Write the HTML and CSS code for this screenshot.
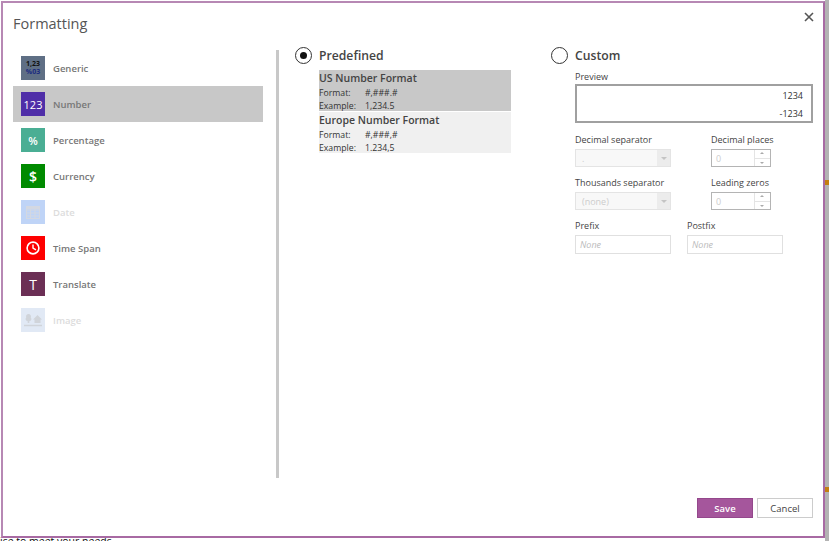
FILE: index.html
```html
<!DOCTYPE html>
<html lang="en">
<head>
    <meta charset="UTF-8">
    <title>Formatting</title>
    <link rel="stylesheet" href="styles.css">
</head>
<body>
    <div class="dialog">
        <div class="dialog-head">
            <h1>Formatting</h1>
            <svg class="close" width="10" height="10" viewBox="0 0 10 10"><path d="M1 1l8 8M9 1l-8 8" stroke="#555" stroke-width="1.6" fill="none"/></svg>
        </div>
        <div class="dialog-body">
            <ul class="nav">
                <li class="nav-item">
                    <span class="tile tile-generic"><span>1,23</span><span class="blue">%03</span></span>
                    Generic
                </li>
                <li class="nav-item active">
                    <span class="tile tile-number">123</span>
                    Number
                </li>
                <li class="nav-item">
                    <span class="tile tile-percent">%</span>
                    Percentage
                </li>
                <li class="nav-item">
                    <span class="tile tile-currency">$</span>
                    Currency
                </li>
                <li class="nav-item disabled">
                    <span class="tile tile-date">
                        <svg width="14" height="13" viewBox="0 0 14 13"><path d="M0 0h14v3H0z" fill="#d3d8e2"/><path d="M0 4h14M0 7h14M0 10h14M0 12.5h14M.5 3v10M4.5 3v10M9 3v10M13.5 3v10" stroke="#d3d8e2" fill="none"/></svg>
                    </span>
                    Date
                </li>
                <li class="nav-item">
                    <span class="tile tile-time">
                        <svg width="14" height="14" viewBox="0 0 14 14"><circle cx="7" cy="7" r="5.9" stroke="#fff" stroke-width="1.6" fill="none"/><path d="M7 3.5V7l3 1.8" stroke="#fff" stroke-width="1.4" fill="none"/></svg>
                    </span>
                    Time Span
                </li>
                <li class="nav-item">
                    <span class="tile tile-translate">T</span>
                    Translate
                </li>
                <li class="nav-item disabled">
                    <span class="tile tile-image">
                        <svg width="18" height="14" viewBox="0 0 18 14"><path d="M0 12.5h18" stroke="#d0d4da" stroke-width="1.5"/><path d="M4.5 1a2.5 2.5 0 0 1 2.3 3.4A2.300 2.300 0 0 1 5.300 8.300V10H3.700V8.300A2.300 2.300 0 0 1 2.200 4.400 2.500 2.500 0 0 1 4.500 1zM13.500 2L18 6.500h-1.500V10h-6V6.500H9z" fill="#d0d4da"/></svg>
                    </span>
                    Image
                </li>
            </ul>
            <div class="divider"></div>
            <section class="predefined">
                <div class="radio-row">
                    <span class="radio checked"></span>
                    Predefined
                </div>
                <div class="formats">
                    <div class="format selected">
                        <h2>US Number Format</h2>
                        <div class="format-line"><span>Format:</span><span>#,###.#</span></div>
                        <div class="format-line"><span>Example:</span><span>1,234.5</span></div>
                    </div>
                    <div class="format">
                        <h2>Europe Number Format</h2>
                        <div class="format-line"><span>Format:</span><span>#,###,#</span></div>
                        <div class="format-line"><span>Example:</span><span>1.234,5</span></div>
                    </div>
                </div>
            </section>
            <section class="custom">
                <div class="radio-row">
                    <span class="radio"></span>
                    Custom
                </div>
                <div class="fields">
                    <label class="field-label">Preview</label>
                    <div class="preview">
                        <div>1234</div>
                        <div>-1234</div>
                    </div>
                    <div class="field-grid">
                        <div class="field">
                            <label class="field-label">Decimal separator</label>
                            <div class="select"><span>.</span><span class="select-arrow"></span></div>
                        </div>
                        <div class="field">
                            <label class="field-label">Decimal places</label>
                            <div class="spinner"><span>0</span><span class="spin-btns"><i class="up"></i><i class="down"></i></span></div>
                        </div>
                        <div class="field">
                            <label class="field-label">Thousands separator</label>
                            <div class="select"><span>(none)</span><span class="select-arrow"></span></div>
                        </div>
                        <div class="field">
                            <label class="field-label">Leading zeros</label>
                            <div class="spinner"><span>0</span><span class="spin-btns"><i class="up"></i><i class="down"></i></span></div>
                        </div>
                    </div>
                    <div class="affix-row">
                        <div class="field">
                            <label class="field-label">Prefix</label>
                            <div class="text-input">None</div>
                        </div>
                        <div class="field">
                            <label class="field-label">Postfix</label>
                            <div class="text-input">None</div>
                        </div>
                    </div>
                </div>
            </section>
        </div>
        <div class="dialog-foot">
            <button class="btn btn-save">Save</button>
            <button class="btn">Cancel</button>
        </div>
    </div>
    <p class="behind-text">ise to meet your needs</p>
    <span class="behind-mark mark-top"></span>
    <span class="behind-mark mark-bottom"></span>
</body>
</html>
```

FILE: styles.css
```css
* {
    box-sizing: border-box;
}

html, body {
    height: 100%;
}

body {
    margin: 0;
    overflow: hidden;
    position: relative;
    padding: 1px 4px 0 1px;
    font-family: "Open Sans", "Noto Sans", sans-serif;
    background: linear-gradient(to left, #b3b3b3 4px, #fff 4px);
    color: #444;
}

.dialog {
    height: 537px;
    display: flex;
    flex-direction: column;
    background-color: #fff;
    border: 2px solid #a86aa3;
    border-top-color: #b788b4;
    border-left-color: #b788b4;
}

.dialog-head {
    height: 44px;
    flex: none;
    display: flex;
    justify-content: space-between;
    align-items: flex-start;
    padding: 10px 9px 0 10px;
}

h1 {
    margin: 0;
    font-size: 14.5px;
    line-height: 22px;
    font-weight: 400;
    color: #555;
}

.close {
    margin-top: -1px;
}

.dialog-body {
    flex: 1;
    display: flex;
    min-height: 0;
}

.nav {
    list-style: none;
    margin: 3px 0 0 10px;
    padding: 0;
    width: 250px;
    flex: none;
}

.nav-item {
    height: 36px;
    display: flex;
    align-items: center;
    gap: 8px;
    padding-left: 8px;
    font-size: 9.5px;
    font-weight: 600;
    color: #777;
}

.nav-item.active {
    background-color: #c8c8c8;
}

.nav-item.disabled {
    color: #dcdcdc;
}

.tile {
    width: 24px;
    height: 24px;
    display: flex;
    flex-direction: column;
    align-items: center;
    justify-content: center;
    color: #fff;
    font-size: 11px;
    font-weight: 400;
}

.tile-generic {
    background-color: #5f6f85;
    color: #111;
    font-size: 7px;
    line-height: 8px;
    font-weight: 700;
}

.tile-generic .blue {
    color: #1a2a80;
}

.tile-number {
    background-color: #4f2ea8;
}

.tile-percent {
    background-color: #4aae94;
    font-weight: 600;
}

.tile-currency {
    background-color: #008a00;
    font-size: 14px;
    font-weight: 600;
}

.tile-date {
    background-color: #bfd4f7;
}

.tile-time {
    background-color: #fe0000;
}

.tile-translate {
    background-color: #6b2f55;
    font-size: 14px;
}

.tile-image {
    background-color: #e1e9f5;
}

.divider {
    width: 3px;
    height: 428px;
    margin: 3px 0 0 13px;
    background-color: #c8c8c8;
    flex: none;
}

.predefined {
    width: 256px;
    margin-left: 16px;
    flex: none;
}

.custom {
    flex: none;
    width: 262px;
}

.radio-row {
    height: 18px;
    display: flex;
    align-items: center;
    gap: 7px;
    font-size: 12.2px;
    font-weight: 600;
    color: #444;
    margin-top: -1px;
}

.radio {
    width: 17px;
    height: 17px;
    border: 1.5px solid #333;
    border-radius: 50%;
    display: flex;
    align-items: center;
    justify-content: center;
    background-color: #fff;
}

.radio.checked::after {
    content: "";
    width: 7px;
    height: 7px;
    border-radius: 50%;
    background-color: #111;
}

.formats {
    margin: 6px 0 0 24px;
    width: 192px;
    display: flex;
    flex-direction: column;
    gap: 1px;
}

.format {
    height: 41px;
    background-color: #f0f0f0;
    padding-top: 1px;
}

.format.selected {
    background-color: #c8c8c8;
}

.format h2 {
    margin: 0 0 2px;
    font-size: 10.5px;
    line-height: 14px;
    font-weight: 600;
    color: #444;
}

.format-line {
    display: grid;
    grid-template-columns: 46px 1fr;
    font-size: 8.7px;
    line-height: 13px;
    color: #333;
}

.fields {
    margin: 7px 0 0 24px;
}

.field-label {
    display: block;
    font-size: 9px;
    line-height: 12px;
    color: #444;
    white-space: nowrap;
}

.preview {
    width: 238px;
    height: 39px;
    margin-top: 1px;
    border: 2px solid #a0a0a0;
    padding: 1px 8px 0 0;
    text-align: right;
    font-size: 9px;
    line-height: 18px;
    color: #333;
}

.field-grid {
    display: grid;
    grid-template-columns: 136px 60px;
    margin-top: 11px;
    row-gap: 10px;
}

.select, .spinner {
    height: 18px;
    margin-top: 3px;
    font-size: 9px;
    color: #ccc;
    display: flex;
}

.select {
    width: 96px;
    border: 1px solid #e4e4e4;
    background-color: #f8f8f8;
    justify-content: space-between;
    padding-left: 6px;
    line-height: 17px;
}

.select-arrow {
    width: 13px;
    background-color: #ececec;
    position: relative;
}

.select-arrow::after {
    content: "";
    position: absolute;
    left: 4px;
    top: 7px;
    border: 3px solid transparent;
    border-top-color: #c4c4c4;
}

.spinner {
    width: 60px;
    border: 1px solid #b4b4b4;
    justify-content: space-between;
    padding-left: 4px;
    line-height: 17px;
}

.spin-btns {
    width: 16px;
    display: flex;
    flex-direction: column;
    border-left: 1px solid #e4e4e4;
}

.spin-btns i {
    flex: 1;
    position: relative;
}

.spin-btns .up {
    border-bottom: 1px solid #e4e4e4;
}

.spin-btns i::after {
    content: "";
    position: absolute;
    left: 5px;
    border: 2.5px solid transparent;
}

.spin-btns .up::after {
    top: 0;
    border-bottom-color: #aaa;
}

.spin-btns .down::after {
    top: 3px;
    border-top-color: #aaa;
}

.affix-row {
    display: flex;
    gap: 16px;
    margin-top: 10px;
}

.text-input {
    width: 96px;
    height: 19px;
    margin-top: 3px;
    border: 1px solid #e0e0e0;
    padding-left: 4px;
    font-size: 9px;
    font-style: italic;
    line-height: 17px;
    color: #bbb;
}

.dialog-foot {
    flex: none;
    height: 38px;
    display: flex;
    justify-content: flex-end;
    gap: 4px;
    padding: 0 10px;
}

.btn {
    width: 56px;
    height: 20px;
    padding: 0;
    border: 1px solid #ccc;
    background-color: #fff;
    font-family: inherit;
    font-size: 9.5px;
    color: #444;
}

.btn-save {
    background-color: #a5569c;
    border-color: #94488c;
    color: #fff;
    font-weight: 600;
}

.behind-text {
    margin: -3px 0 0 -1px;
    font-size: 10.5px;
    line-height: 12px;
    color: #111;
    white-space: nowrap;
    position: relative;
    z-index: -1;
}

.behind-mark {
    position: absolute;
    right: 0;
    width: 4px;
    height: 5px;
    background-color: #c47f10;
}

.mark-top {
    top: 180px;
}

.mark-bottom {
    top: 487px;
}
```
